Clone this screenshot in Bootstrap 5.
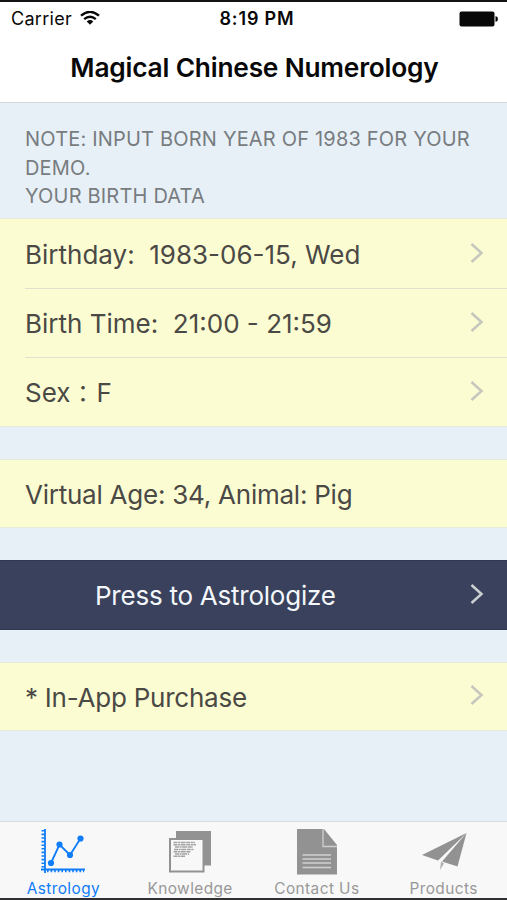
<!DOCTYPE html>
<html lang="en">
<head>
<meta charset="utf-8">
<meta name="viewport" content="width=device-width, initial-scale=1">
<title>Magical Chinese Numerology</title>
<link rel="stylesheet" href="https://cdn.jsdelivr.net/npm/bootstrap@5.3.0/dist/css/bootstrap.min.css">
<style>
body{font-family:Inter,"Noto Sans CJK TC",sans-serif;background:#e8f0f7;color:#4a4945;height:900px}
.screen{height:900px;border-top:2px solid #151215;border-bottom:2px solid #303033}
.topbar{height:101px;background:#fff;border-bottom:1px solid #d5d9db;color:#080808}
.status{height:33px;font-size:18px;line-height:33px;padding:0 9px 0 11px}
.status .carrier{letter-spacing:.3px}
.status .clock{font-weight:600;font-size:18px;letter-spacing:.85px;padding-left:5px}
.status>*{flex:1 1 0}
.title{font-size:26.3px;font-weight:600;line-height:66px;letter-spacing:-.2px;margin:0;padding-left:2px}
.note{height:115px;padding:22px 25px 0;font-size:20px;line-height:28.5px;letter-spacing:.19px;white-space:nowrap;color:#777c80}
.cells{margin-bottom:32px;background:#fcfcd2;border-top:1px solid #e6eadb;border-bottom:1px solid #e6eadb}
.cell-row{height:69px;padding:0 23px 0 25px;font-size:26px;white-space:pre}
.cell-row>span{padding-top:2px}
.cells .cell-row+.cell-row{background:linear-gradient(#e0e1cf,#e0e1cf) 25px 0/100% 1px no-repeat}
.single .cell-row{height:67.3px;letter-spacing:-.24px}
.dark{background:#39415c;border-color:#2f3752;color:#f3f7fb}
.dark .cell-row{padding-left:95px}
.wide-colon{font-size:23px;margin:0 2px 0 1px}
.chev{width:14px;height:22px;fill:none;stroke:#c5c6bd;stroke-width:2.5;margin-top:-2px}
.dark .chev{stroke:#cbd0d0}
.tabs{height:77px;background:#f8f8f8;border-top:1px solid #d9dcde;font-size:15.4px;line-height:20px;letter-spacing:.42px}
.tabs a{color:#999;text-decoration:none}
.tabs a.on{color:#0f7cf8}
.tabs svg{width:50px;height:50px;margin:5px 0 2px}
</style>
<script src="https://cdn.jsdelivr.net/npm/bootstrap@5.3.0/dist/js/bootstrap.bundle.min.js"></script>
</head>
<body>
<div class="screen d-flex flex-column overflow-hidden">
<header class="topbar flex-shrink-0">
  <div class="status d-flex align-items-center">
    <div class="d-flex align-items-center"><span class="carrier">Carrier</span>
      <svg class="ms-2" width="20" height="16" viewBox="0 0 20 16" fill="none" stroke="#080808" stroke-width="2.4"><path d="M1 4.7Q10-3 19 4.700M4.200 8.100Q10 3.200 15.800 8.100"/><path d="M6.700 10.400Q10 7.800 13.300 10.400L10 13.800Z" fill="#080808" stroke="none"/></svg></div>
    <div class="clock text-center">8:19 PM</div>
    <div class="d-flex justify-content-end"><svg width="39" height="16" viewBox="0 0 39 16"><rect x=".5" y=".5" width="35" height="15" rx="2" fill="#080808"/><path d="M36.5 5Q39 5.500 39 8T36.500 11Z" fill="#080808"/></svg></div>
  </div>
  <h1 class="title text-center">Magical Chinese Numerology</h1>
</header>
<main class="flex-grow-1">
  <div class="note">NOTE: INPUT BORN YEAR OF 1983 FOR YOUR<br>DEMO.<br>YOUR BIRTH DATA</div>
  <div class="cells">
    <div class="cell-row d-flex align-items-center justify-content-between"><span>Birthday:  1983-06-15, Wed</span><svg class="chev" viewBox="0 0 14 22"><path d="M1.500 2L11.500 11L1.500 20"/></svg></div>
    <div class="cell-row d-flex align-items-center justify-content-between"><span>Birth Time:  21:00 - 21:59</span><svg class="chev" viewBox="0 0 14 22"><path d="M1.500 2L11.500 11L1.500 20"/></svg></div>
    <div class="cell-row d-flex align-items-center justify-content-between"><span>Sex<span class="wide-colon" lang="zh-Hant">：</span>F</span><svg class="chev" viewBox="0 0 14 22"><path d="M1.500 2L11.500 11L1.500 20"/></svg></div>
  </div>
  <div class="cells single"><div class="cell-row d-flex align-items-center"><span>Virtual Age: 34, Animal: Pig</span></div></div>
  <div class="cells single dark"><div class="cell-row d-flex align-items-center justify-content-between"><span>Press to Astrologize</span><svg class="chev" viewBox="0 0 14 22"><path d="M1.500 2L11.500 11L1.500 20"/></svg></div></div>
  <div class="cells single mb-0"><div class="cell-row d-flex align-items-center justify-content-between"><span>* In-App Purchase</span><svg class="chev" viewBox="0 0 14 22"><path d="M1.500 2L11.500 11L1.500 20"/></svg></div></div>
</main>
<nav class="tabs row g-0 flex-shrink-0 text-center">
  <a href="#" class="on col d-flex flex-column align-items-center"><svg viewBox="0 0 50 50" fill="none" stroke="#0f7cf8" stroke-width="1.8"><path d="M7 2V46M3 42.500H47"/><path d="M5 3V42" stroke-width="3" stroke-dasharray="1.600 2"/><path d="M9 43.800H46" stroke-width="3" stroke-dasharray="1.600 2"/><path d="M13 36L21.500 17.500L32 28L42.500 11.500"/><g fill="#0f7cf8" stroke="none"><circle cx="13" cy="36" r="3.100"/><circle cx="21.500" cy="17.500" r="3.100"/><circle cx="32" cy="28" r="3.100"/><circle cx="42.500" cy="11.500" r="3.100"/></g></svg><span>Astrology</span></a>
  <a href="#" class="col d-flex flex-column align-items-center"><svg viewBox="0 0 50 50"><path d="M11 4H46V38.500H11Z" fill="#929292"/><path d="M5 12H38.500V44.500H5Z" fill="#f8f8f8" stroke="#929292" stroke-width="2"/><path d="M8.500 15.500H30M8.500 17.800H31M10 20.100H28M9 22.400H29M8.500 24.700H26M10 27H24M8.500 29.300H20" fill="none" stroke="#a2a2a2" stroke-width="1.500" stroke-dasharray="4 .6 2 .5 5 .7"/></svg><span>Knowledge</span></a>
  <a href="#" class="col d-flex flex-column align-items-center"><svg viewBox="0 0 50 50"><path d="M5 2H32L45 18V47.500H5Z" fill="#929292"/><path d="M31 2V19.500H45M10.500 28H39M10.500 32H39M10.500 36H39M10.500 40.500H39" fill="none" stroke="#cfcfcf" stroke-width="1.300"/></svg><span>Contact Us</span></a>
  <a href="#" class="col d-flex flex-column align-items-center"><svg viewBox="0 0 50 50"><path d="M47.500 6L3 28L19 33.500Z" fill="#929292"/><path d="M47.500 6L23 34.500L38.500 39.500Z" fill="#929292"/><path d="M22 34.500L25 36.500L21 43Z" fill="#b0b0b0"/></svg><span>Products</span></a>
</nav>
</div>
</body>
</html>
